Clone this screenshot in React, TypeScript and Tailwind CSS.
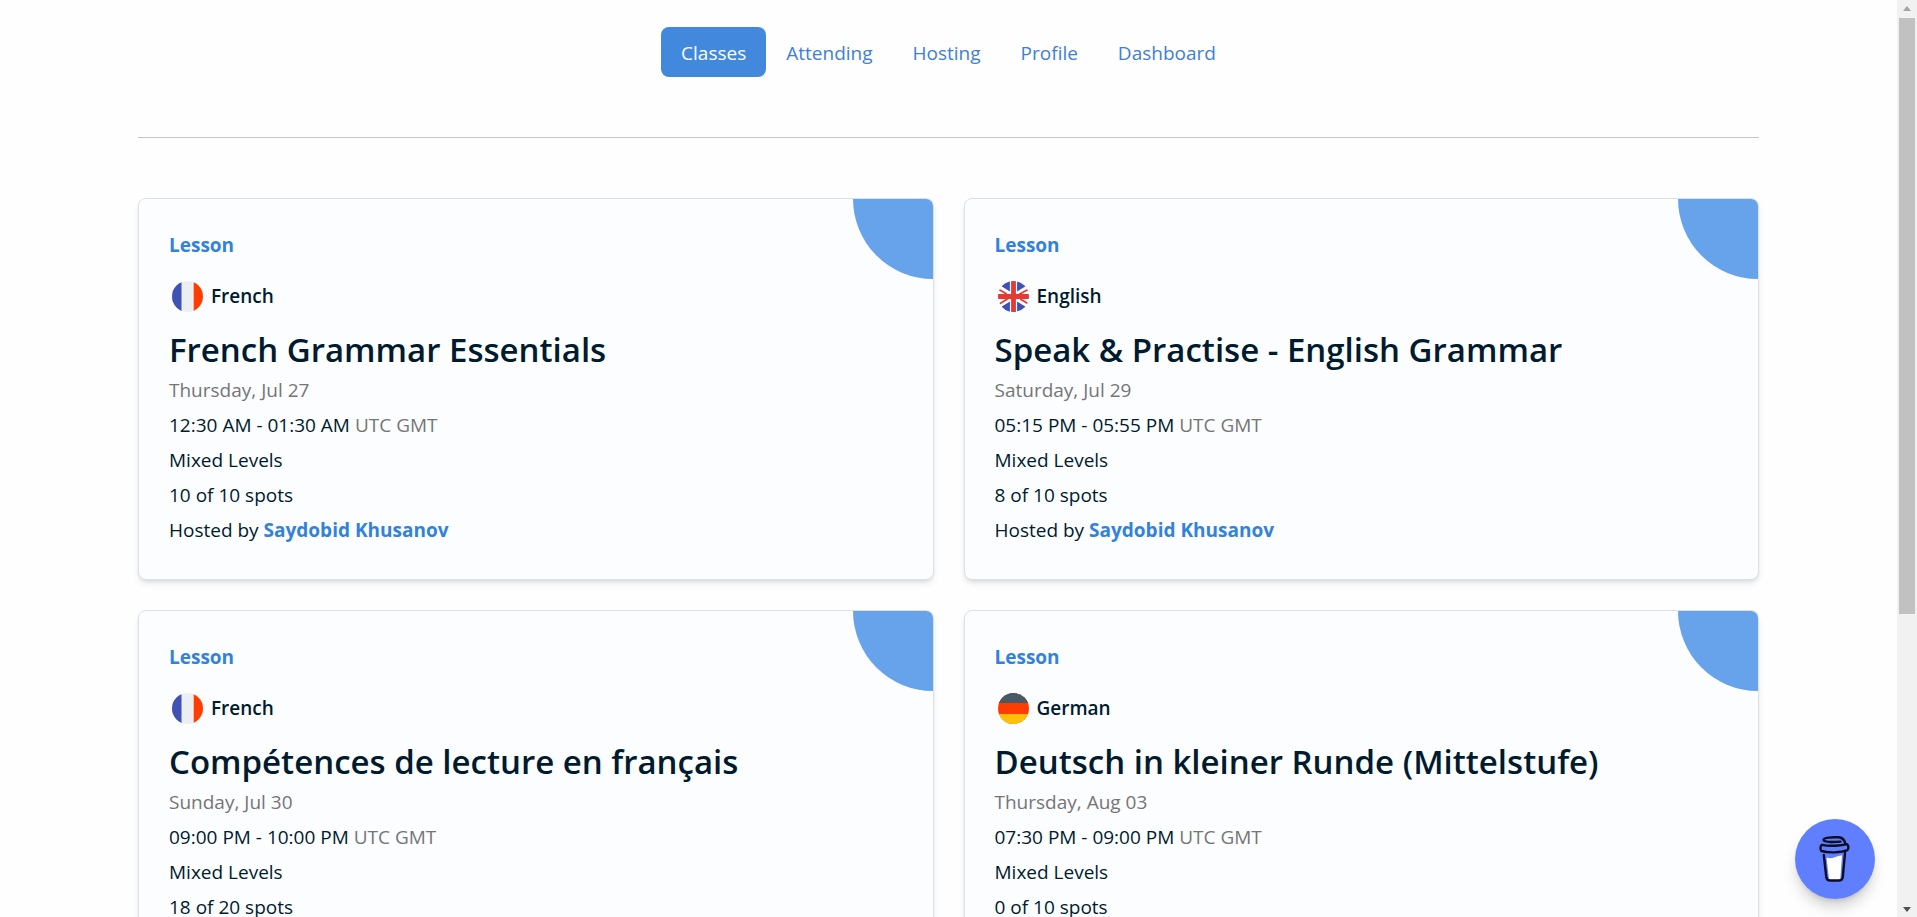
import React from "react";

type Language = "French" | "English" | "German";

interface Lesson {
  language: Language;
  title: string;
  date: string;
  time: string;
  level: string;
  spots: string;
  host: string;
}

const lessons: Lesson[] = [
  {
    language: "French",
    title: "French Grammar Essentials",
    date: "Thursday, Jul 27",
    time: "12:30 AM - 01:30 AM",
    level: "Mixed Levels",
    spots: "10 of 10 spots",
    host: "Saydobid Khusanov",
  },
  {
    language: "English",
    title: "Speak & Practise - English Grammar",
    date: "Saturday, Jul 29",
    time: "05:15 PM - 05:55 PM",
    level: "Mixed Levels",
    spots: "8 of 10 spots",
    host: "Saydobid Khusanov",
  },
  {
    language: "French",
    title: "Compétences de lecture en français",
    date: "Sunday, Jul 30",
    time: "09:00 PM - 10:00 PM",
    level: "Mixed Levels",
    spots: "18 of 20 spots",
    host: "Saydobid Khusanov",
  },
  {
    language: "German",
    title: "Deutsch in kleiner Runde (Mittelstufe)",
    date: "Thursday, Aug 03",
    time: "07:30 PM - 09:00 PM",
    level: "Mixed Levels",
    spots: "0 of 10 spots",
    host: "Saydobid Khusanov",
  },
];

const navItems = ["Classes", "Attending", "Hosting", "Profile", "Dashboard"];

function Flag({ language, id }: { language: Language; id: string }) {
  return (
    <svg viewBox="0 0 32 32" className="size-[31px] shrink-0" aria-hidden="true">
      <clipPath id={id}>
        <circle cx="16" cy="16" r="16" />
      </clipPath>
      <g clipPath={`url(#${id})`}>
        {language === "French" && (
          <>
            <rect width="32" height="32" fill="#eceff1" />
            <rect width="9.8" height="32" fill="#3f51b5" />
            <rect x="22.4" width="10" height="32" fill="#ff3d00" />
          </>
        )}
        {language === "German" && (
          <>
            <rect width="32" height="32" fill="#ff3d00" />
            <rect width="32" height="10.3" fill="#455a64" />
            <rect y="21.7" width="32" height="10.3" fill="#ffc107" />
          </>
        )}
        {language === "English" && (
          <>
            <rect width="32" height="32" fill="#fff" />
            <path
              d="M12.300 0v10.800L3.500 5.500V0ZM19.700 0v10.800L28.500 5.500V0ZM12.300 32V21.200L3.500 26.500V32ZM19.700 32V21.200L28.500 26.500V32Z"
              fill="#3f51b5"
            />
            <path
              d="M0 8.200 9 13.300M32 8.200 21.500 14M10.500 18 0 24.500M23 18.700 32 24"
              stroke="#e53935"
              strokeWidth="1.800"
            />
            <path d="M16 0v32M0 16h32" stroke="#e53935" strokeWidth="5" />
          </>
        )}
      </g>
    </svg>
  );
}

function LessonCard({ lesson, id }: { lesson: Lesson; id: string }) {
  return (
    <article className="relative overflow-hidden rounded-lg border border-[#dce1e8] bg-[#fcfdff] px-[30px] pt-[29px] pb-[31px] shadow-md shadow-black/10">
      <div className="absolute top-0 right-0 size-20 rounded-bl-full bg-[#67a3ea]" />
      <p className="font-bold text-[#3182dc]">Lesson</p>
      <div className="mt-4 flex items-center gap-2 pl-[3px]">
        <Flag language={lesson.language} id={id} />
        <span className="font-semibold">{lesson.language}</span>
      </div>
      <h2 className="mt-3 text-[33px] leading-[47px] font-semibold">{lesson.title}</h2>
      <p className="text-[#757575]">{lesson.date}</p>
      <p>
        {lesson.time} <span className="text-[#757575]">UTC GMT</span>
      </p>
      <p>{lesson.level}</p>
      <p>{lesson.spots}</p>
      <p>
        Hosted by{" "}
        <a href="#host" className="font-bold text-[#3182dc]">
          {lesson.host}
        </a>
      </p>
    </article>
  );
}

function CoffeeIcon() {
  return (
    <svg viewBox="0 0 32 46" className="h-[46px] w-8" fill="none" aria-hidden="true">
      <path d="M7.5 21.5c5 2.500 9-1.500 15.500-2.300L21.300 43H10z" fill="#fff" />
      <g stroke="#0d0c22" strokeWidth="2.400" strokeLinecap="round" strokeLinejoin="round">
        <path d="M21.500 5.600C13 6.500 4.500 6 4.500 3.800 4.500 1.500 13 1 19.500 1.300c4.500.2 6 2.500 6.800 6.200" />
        <path d="M3 8.800C9 10.200 22 10 28 8.200c1.600 1 2 4.800.3 6C22 16.800 9 17 2.500 15 1 13.800 1 9.800 3 8.800Z" />
        <path d="M4.800 19 7.300 41c.3 2.800 1.500 3.600 4 3.600h8.200c2.800 0 4-1 4.300-3.800L26 17" />
      </g>
    </svg>
  );
}

function ScrollTrack() {
  return (
    <div className="flex w-5 shrink-0 flex-col items-center bg-[#f1f1f1]" aria-hidden="true">
      <svg viewBox="0 0 20 18" className="h-[18px] w-5 shrink-0">
        <path d="M6 11 10 6l4 5z" fill="#a3a3a3" />
      </svg>
      <div className="h-[65%] w-4 bg-[#c1c1c1]" />
      <svg viewBox="0 0 20 18" className="mt-auto h-[18px] w-5 shrink-0">
        <path d="M6 8h8l-4 5z" fill="#505050" />
      </svg>
    </div>
  );
}

export default function App() {
  return (
    <div className="flex h-screen overflow-hidden bg-[#fefefe] font-['Open_Sans','Noto_Sans',sans-serif] text-[19px] leading-[35px] text-[#001b2e]">
      <div className="flex-1 overflow-y-auto [scrollbar-width:none]">
        <div className="mx-auto max-w-[1681px] px-[30px] pb-[30px]">
          <nav className="flex justify-center pt-[27px]">
            {navItems.map((item, i) => (
              <a
                key={item}
                href={`#${item.toLowerCase()}`}
                className={
                  i === 0
                    ? "rounded-lg bg-[#4288dc] px-5 pt-[9px] pb-[7px] leading-[34px] text-white"
                    : "px-5 pt-[9px] pb-[7px] leading-[34px] text-[#3f7fd6]"
                }
              >
                {item}
              </a>
            ))}
          </nav>
          <hr className="my-[60px] border-[#c4c4c4]" />
          <main className="grid grid-cols-1 gap-[30px] lg:grid-cols-2">
            {lessons.map((lesson, i) => (
              <LessonCard key={lesson.title} lesson={lesson} id={`flag-${i}`} />
            ))}
          </main>
        </div>
      </div>
      <ScrollTrack />
      <button
        type="button"
        aria-label="Buy me a coffee"
        className="fixed right-[42px] bottom-[18px] flex size-20 items-center justify-center rounded-full bg-[#5f7fff] shadow-lg shadow-black/20"
      >
        <CoffeeIcon />
      </button>
    </div>
  );
}
